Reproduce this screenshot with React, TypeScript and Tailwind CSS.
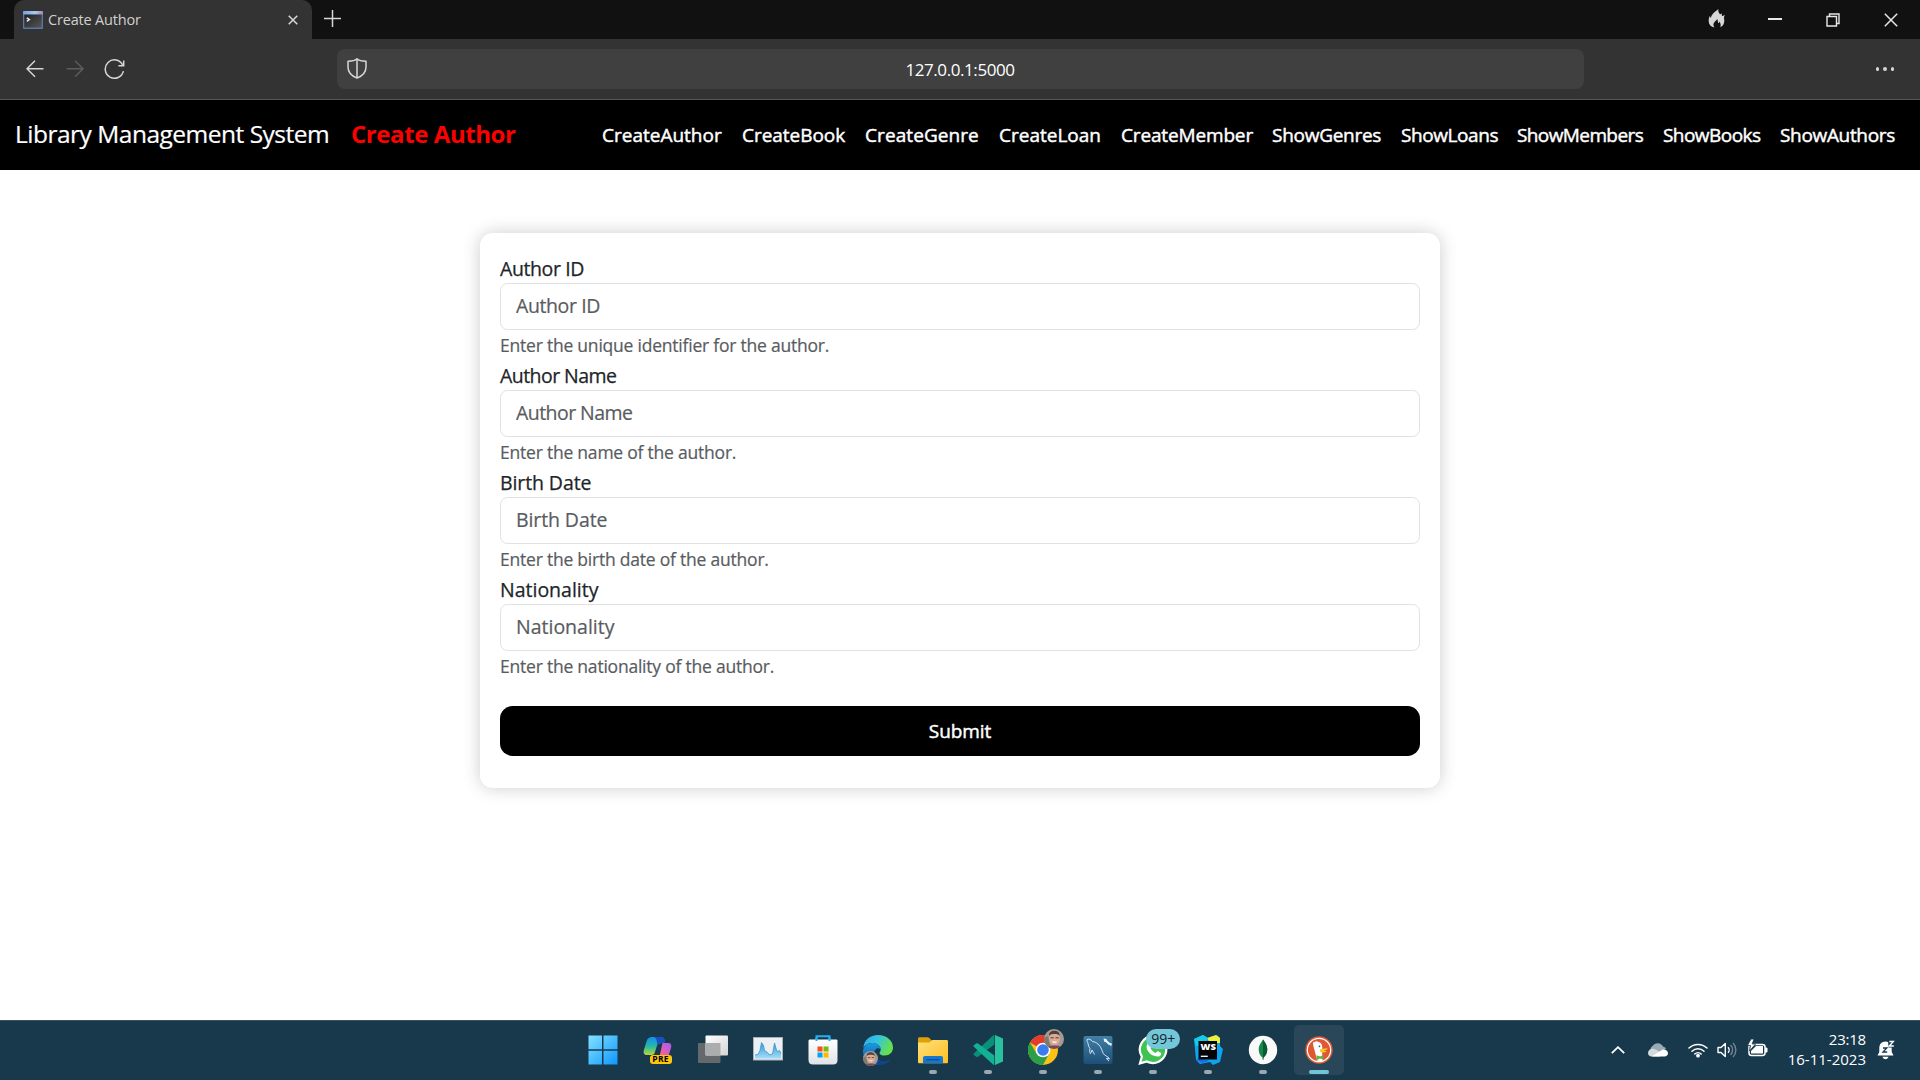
import type { ReactNode } from "react";

const links = [
  { label: "CreateAuthor", cls: "w-[120px]" },
  { label: "CreateBook", cls: "w-[103px] tracking-[-0.04px]" },
  { label: "CreateGenre", cls: "w-[114px] tracking-[0.08px]" },
  { label: "CreateLoan", cls: "w-[102px]" },
  { label: "CreateMember", cls: "w-[131px] tracking-[-0.15px]" },
  { label: "ShowGenres", cls: "w-[109px] tracking-[-0.27px]" },
  { label: "ShowLoans", cls: "w-[96px] tracking-[-0.42px]" },
  { label: "ShowMembers", cls: "w-[126px] tracking-[-0.6px]" },
  { label: "ShowBooks", cls: "w-[97px] tracking-[-0.55px]" },
  { label: "ShowAuthors", cls: "w-[115px] tracking-[-0.33px]" },
];

const fields = [
  { label: "Author ID", cls: "tracking-[-0.4px]", help: "Enter the unique identifier for the author." },
  { label: "Author Name", cls: "tracking-[-0.55px]", help: "Enter the name of the author." },
  { label: "Birth Date", cls: "tracking-[-0.1px]", help: "Enter the birth date of the author." },
  { label: "Nationality", cls: "", help: "Enter the nationality of the author." },
];

function Ico({ children, className = "size-[30px]", box = "0 0 30 30" }: { children: ReactNode; className?: string; box?: string }) {
  return (
    <svg viewBox={box} className={`shrink-0 ${className}`} fill="none">
      {children}
    </svg>
  );
}

function TitleBar() {
  return (
    <div className="flex h-[39px] bg-[#111111] pl-[14px] text-[#d0d0d0]">
      <div className="flex h-full w-[298px] items-center rounded-t-[10px] bg-[#333333] pl-[9px] pr-[14px]">
        <Ico className="h-[18px] w-5" box="0 0 20 18">
          <defs>
            <linearGradient id="term" x1="0" y1="0" x2="1" y2="1">
              <stop stopColor="#222" />
              <stop offset="1" stopColor="#555" />
            </linearGradient>
            <linearGradient id="termbar" x1="0" x2="1">
              <stop stopColor="#6fa0dd" />
              <stop offset=".6" stopColor="#a9c9f0" />
              <stop offset="1" stopColor="#9a8fc0" />
            </linearGradient>
          </defs>
          <rect width="20" height="18" rx="1" fill="#5878ac" />
          <rect width="20" height="3.5" rx="1" fill="url(#termbar)" />
          <rect x="1.3" y="3.6" width="17.4" height="13" fill="url(#term)" />
          <rect x="16" y="1" width="2.5" height="1.6" fill="#c98a9c" />
          <path d="M3.8 6.8 6.4 8.6 3.8 10.4" stroke="#eee" strokeWidth="1.4" />
        </Ico>
        <span className="ml-[5px] mt-px flex-1 whitespace-nowrap text-[14.5px] leading-5 tracking-[-0.18px]">Create Author</span>
        <Ico className="size-[10px]" box="0 0 10 10">
          <path d="M.7.7 9.3 9.3M9.3.7.7 9.3" stroke="#d8d8d8" strokeWidth="1.5" />
        </Ico>
      </div>
      <Ico className="ml-[11px] mt-[9px] size-[19px]" box="0 0 19 19">
        <path d="M9.5 1v17M1 9.5h17" stroke="#d8d8d8" strokeWidth="1.5" />
      </Ico>
      <div className="flex-1" />
      <Ico className="mr-[43px] mt-[9px] h-[19px] w-[17px]" box="0 0 17 19">
        <path
          d="M10.4 0c-.5 2.300.4 4 1.700 5.300.9-.3 1.300-.7 1.300-1.300.5 1 .4 2.200.7 3.100.8-.2 1.300-.9 2.700-1.200-1.300 2.300-.5 3.900-.5 6.200 0 3-1.700 5.300-4 6.200.9-2.300.1-4.300-.8-5.900-.2 1-.8 1.500-1.400 1.700.1-1.700-.7-3.100-.8-4.100-1 1.700-3.900 3.200-3.900 5.500 0 1 .4 2 1 2.900C3 18 .9 15.600.7 12.500c-.1-1.900.3-3.900 1-5.400.4.8.7 1.500 1.300 2C3.200 5.200 6.600 3.400 10.400 0Z"
          fill="#d6d6d6"
        />
      </Ico>
      <Ico className="mr-11 mt-[18px] h-[2px] w-[14px]" box="0 0 14 2">
        <path d="M0 1h14" stroke="#e8e8e8" strokeWidth="2" />
      </Ico>
      <Ico className="mr-[44px] mt-[13px] size-[14px]" box="0 0 14 14">
        <path d="M1 3.500h9.500V13H1ZM3.500 3.500V1H13v9.500h-2.500" stroke="#e8e8e8" strokeWidth="1.400" />
      </Ico>
      <Ico className="mr-[22px] mt-[13px] size-[14px]" box="0 0 14 14">
        <path d="M.8.8 13.200 13.200M13.200.8.8 13.200" stroke="#e8e8e8" strokeWidth="1.500" />
      </Ico>
    </div>
  );
}

function Toolbar() {
  return (
    <div className="flex h-[61px] border-b border-[#575757] bg-[#333333]">
      <div className="flex w-[337px] shrink-0 items-start pl-[26px] pt-[20px]">
        <Ico className="mt-px size-[18px]" box="0 0 18 18">
          <path d="M17.500 8.700H1M9 .7 1 8.700l8 8" stroke="#d6d6d6" strokeWidth="1.500" />
        </Ico>
        <Ico className="ml-[22px] mt-px size-[18px]" box="0 0 18 18">
          <path d="M.5 8.700H17M9 .7l8 8-8 8" stroke="#5d5d5d" strokeWidth="1.500" />
        </Ico>
        <Ico className="ml-[20px] size-[21px]" box="0 0 21 21">
          <path d="M19.400 12.200A9.200 9.200 0 1 1 18.600 5.800M19.700 1.500v5.200h-5.300" stroke="#d6d6d6" strokeWidth="1.500" />
        </Ico>
      </div>
      <div className="mt-[10px] flex h-10 w-[1247px] items-center rounded-[8px] bg-[#404040] pl-[10px] pr-[31px]">
        <Ico className="mb-px h-[21px] w-5" box="0 0 20 21">
          <path d="M10 .8C8.200 2.500 4.900 3.200 1 3.200V9c0 5.300 3.700 9 9 11.100 5.300-2.100 9-5.800 9-11.100V3.200c-3.900 0-7.200-.7-9-2.400ZM10 1v19" stroke="#d6d6d6" strokeWidth="1.500" strokeLinejoin="round" />
        </Ico>
        <span className="flex-1 pt-px text-center text-[17px] tracking-[-0.42px] text-white">127.0.0.1:5000</span>
      </div>
      <div className="ml-auto mr-[26px] flex h-[60px] items-center gap-[4px]">
        <span className="size-[3.500px] rounded-full bg-[#d6d6d6]" />
        <span className="size-[3.500px] rounded-full bg-[#d6d6d6]" />
        <span className="size-[3.500px] rounded-full bg-[#d6d6d6]" />
      </div>
    </div>
  );
}

function NavBar() {
  return (
    <nav className="flex h-[70px] items-center whitespace-nowrap bg-black pl-[15px] pr-[25px]">
      <span className="w-[314px] pb-[2px] text-[24.5px] tracking-[-0.5px] text-white [-webkit-text-stroke:0.2px_white]">Library Management System</span>
      <span className="ml-[22px] pb-[2px] text-[24px] font-bold tracking-[-0.42px] text-[#ff0000]">Create Author</span>
      <div className="ml-auto flex gap-5 text-[19px] font-medium text-white [-webkit-text-stroke:0.45px_white]">
        {links.map((l) => (
          <a key={l.label} className={l.cls}>
            {l.label}
          </a>
        ))}
      </div>
    </nav>
  );
}

function AuthorForm() {
  return (
    <form className="mx-auto mt-[63px] h-[555px] w-[960px] rounded-[12.5px] bg-white px-5 pt-5 shadow-[0_0_18px_rgba(0,0,0,0.2)]">
      {fields.map((f) => (
        <div key={f.label} className="h-[107px]">
          <label className={`block h-[30px] text-[19.5px] leading-[31px] text-[#212529] [-webkit-text-stroke:0.25px_#212529] ${f.cls}`}>{f.label}</label>
          <input
            placeholder={f.label}
            className={`block h-[47px] w-full rounded-[7.5px] border border-[#dee2e6] px-[15px] pb-[2px] text-[19.5px] [-webkit-text-stroke:0.2px_#595c5f] placeholder:text-[#595c5f] ${f.cls}`}
          />
          <div className="mt-[2px] h-[26px] text-[17.5px] leading-[26px] tracking-[-0.22px] text-[#595c5f] [-webkit-text-stroke:0.2px_#595c5f]">{f.help}</div>
        </div>
      ))}
      <button type="button" className="mt-[25px] h-[50px] w-full rounded-[12.5px] bg-black text-[19px] font-medium tracking-[-0.1px] text-white [-webkit-text-stroke:0.45px_white]">
        Submit
      </button>
    </form>
  );
}

function Avatar({ className }: { className: string }) {
  return (
    <svg viewBox="0 0 20 20" className={`absolute rounded-full ${className}`}>
      <rect width="20" height="20" fill="#a79a92" />
      <path d="M0 20V9l4-2 3 13Z" fill="#7d7a70" />
      <ellipse cx="10.500" cy="9.500" rx="5.500" ry="7" fill="#d9ab96" />
      <path d="M5 7C4.500 3 8 1.500 11 1.800s5 2.200 4.600 5.200c-1-1.500-2-2-5-2S6 5.500 5 7Z" fill="#54403a" />
      <path d="M6.500 8.800h3.200M11.500 8.800h3.200" stroke="#4a3934" strokeWidth="1" />
      <path d="M8.500 12.500c1.200 1 2.800 1 4 0" stroke="#fff" strokeWidth="1.100" fill="none" />
      <path d="M3 20c1-3 4-3.500 7.500-3.500S17 17 18 20Z" fill="#7b4a50" />
    </svg>
  );
}

const apps: { name: string; open?: boolean; active?: boolean; icon: ReactNode }[] = [
  {
    name: "start",
    icon: (
      <Ico>
        <defs>
          <linearGradient id="win" x1="0" y1="0" x2="30" y2="30" gradientUnits="userSpaceOnUse">
            <stop stopColor="#86e3ff" />
            <stop offset="1" stopColor="#0b95ff" />
          </linearGradient>
        </defs>
        <path d="M.5.5H14v13.800H.5ZM15.500.5h14v13.800h-14ZM.5 15.700H14v13.800H.5ZM15.500 15.700h14v13.800h-14Z" fill="url(#win)" />
      </Ico>
    ),
  },
  {
    name: "copilot",
    icon: (
      <div className="relative">
        <Ico>
          <defs>
            <linearGradient id="cpa" x1="0" y1="0" x2="0" y2="1">
              <stop stopColor="#168cf0" />
              <stop offset=".5" stopColor="#25b8a8" />
              <stop offset="1" stopColor="#b5d63a" />
            </linearGradient>
            <linearGradient id="cpb" x1="1" y1="0" x2="0" y2="1">
              <stop stopColor="#a45cf5" />
              <stop offset=".6" stopColor="#ec5faa" />
              <stop offset="1" stopColor="#ff9a55" />
            </linearGradient>
          </defs>
          <path d="M9 2h9c2.500 0 3.500 2 4.200 5L17 8.500c-2 0-2.700 1-3.300 3l-1.900 6c-.6 1.800-1.500 2.500-3.300 2.500H4c-3 0-4-2-3-5.500L3.700 6C4.600 3 6.500 2 9 2Z" fill="url(#cpa)" />
          <path d="M11 2h7c2.500 0 3.500 2 4.200 5L17 8.500c-1.500 0-2.200.5-2.800 1.500C14 6 13.500 3 11 2Z" fill="#174fc0" />
          <path d="M19.500 8H25c3 0 3.800 2 3 5l-2.500 8c-1 3-2.500 4-5 4h-7c2.200-1 2.700-3 3.500-5.500L19.500 8Z" fill="url(#cpb)" />
        </Ico>
        <span className="absolute left-[7px] top-[20px] flex h-[9px] w-[22px] items-center justify-center rounded-[3px] bg-[#ffc60a] text-[8.500px] font-bold leading-none tracking-[0.3px] text-black">
          PRE
        </span>
      </div>
    ),
  },
  {
    name: "taskview",
    icon: (
      <Ico>
        <defs>
          <linearGradient id="tva" x1="0" y1="0" x2="1" y2="1">
            <stop stopColor="#fff" />
            <stop offset="1" stopColor="#d5d5d5" />
          </linearGradient>
        </defs>
        <rect y="8" width="22.500" height="20" rx="1" fill="#66696c" />
        <rect x="7.500" y=".5" width="22.500" height="20" rx="1" fill="url(#tva)" />
        <path d="M7.500 8h15v12.500h-15Z" fill="#acaeae" />
      </Ico>
    ),
  },
  {
    name: "monitor",
    icon: (
      <Ico>
        <defs>
          <linearGradient id="mon" x1="0" y1="0" x2="0" y2="1">
            <stop stopColor="#2f9ad8" />
            <stop offset="1" stopColor="#a6dcf8" />
          </linearGradient>
        </defs>
        <rect x=".5" y="2.500" width="29" height="22.500" fill="#eceff3" stroke="#a9b0b8" />
        <path d="M2 23.500V20l3-.5 2-4 1.500-8 2 3 1 5 3 2 2 2.500 3-1 1-5 1-6 2 7 1 1.500 2-1 1.500 3v5Z" fill="url(#mon)" />
        <path d="M2 20l3-.5 2-4 1.500-8 2 3 1 5 3 2 2 2.500 3-1 1-5 1-6 2 7 1 1.500 2-1 1.500 3" stroke="#3a94cc" strokeWidth=".8" />
      </Ico>
    ),
  },
  {
    name: "store",
    icon: (
      <Ico>
        <defs>
          <linearGradient id="sto" x1="0" y1="0" x2="0" y2="1">
            <stop stopColor="#fff" />
            <stop offset="1" stopColor="#dfe2e6" />
          </linearGradient>
        </defs>
        <path d="M8.500 6V1.300h13V6" stroke="#22b0ee" strokeWidth="2" />
        <path d="M.5 6c0-1 .5-1.500 1.500-1.500h26c1 0 1.500.5 1.500 1.500v19c0 3-1.500 4.500-4.500 4.500H5C2 29.500.5 28 .5 25Z" fill="url(#sto)" />
        <path d="M8.500 2v4M21.500 2v4" stroke="#22b0ee" strokeWidth="2" />
        <rect x="9.500" y="11.500" width="5" height="5" fill="#f25022" />
        <rect x="15.500" y="11.500" width="5" height="5" fill="#7fba00" />
        <rect x="9.500" y="17.500" width="5" height="5" fill="#00a4ef" />
        <rect x="15.500" y="17.500" width="5" height="5" fill="#ffb900" />
      </Ico>
    ),
  },
  {
    name: "edge",
    icon: (
      <div className="relative">
        <Ico>
          <defs>
            <linearGradient id="eda" x1="0" y1="0" x2="1" y2=".4">
              <stop stopColor="#2aa9ea" />
              <stop offset=".5" stopColor="#35c4e0" />
              <stop offset="1" stopColor="#66e04c" />
            </linearGradient>
            <linearGradient id="edb" x1="0" y1="0" x2="0" y2="1">
              <stop stopColor="#1a9be0" />
              <stop offset="1" stopColor="#0d4fa5" />
            </linearGradient>
          </defs>
          <path d="M.3 13C1 5 7 0 15 0c8.500 0 15 5.500 15 12.500 0 4.800-3.600 8-8.200 8-3.500 0-5.300-1.300-5.300-2.600 0-.9 1.200-1.300 1.200-3.500C17.700 10.500 13.500 8 9.300 8 5 8 1.800 10 .3 13Z" fill="url(#eda)" />
          <path d="M0 16C.6 11 4.500 8 9.300 8c4 0 8.400 2.500 8.400 6.400-2-2.300-6.400-1.400-6.400 3.600 0 5 5 8.700 10 8.700 3 0 5-1 6.400-2.200C25 28 20 30 15 30 6 30-.5 23.500 0 16Z" fill="url(#edb)" />
          <path d="M11.300 18c0 5 5 8.700 10 8.700 3 0 5-1 6.400-2.200C25 28 20 30 15 30c2-1-5-5-3.700-12Z" fill="#0f4590" />
        </Ico>
        <Avatar className="left-0 top-[16px] size-[15px]" />
      </div>
    ),
  },
  {
    name: "files",
    open: true,
    icon: (
      <Ico>
        <defs>
          <linearGradient id="fld" x1="0" y1="0" x2="1" y2="1">
            <stop stopColor="#ffe07a" />
            <stop offset="1" stopColor="#fdbf22" />
          </linearGradient>
        </defs>
        <path d="M0 4c0-1.200.6-1.800 1.700-1.800h7.500c1 0 1.600.3 2.200.9L14 6v5H0Z" fill="#dfa008" />
        <path d="M0 7.500h10.500c1 0 1.500-.3 2.300-1.200.7-.8 1.200-1.200 2.200-1.200h13.500c1 0 1.500.5 1.500 1.500v20.200c0 1-.5 1.500-1.500 1.500h-27C.5 28.300 0 27.800 0 26.800Z" fill="url(#fld)" />
        <path d="M5 28.300V23c0-1.300.7-2 2-2h16c1.300 0 2 .7 2 2v5.300Z" fill="#1677cf" />
        <path d="M8.500 24.700h13" stroke="#0c4c91" strokeWidth="1.200" />
      </Ico>
    ),
  },
  {
    name: "code",
    open: true,
    icon: (
      <Ico>
        <path d="M22 0 30 3.500v23L22 30Z" fill="#29c0a0" />
        <path d="M21.300 0v9.500L5 21.800c-.6.400-1.300.4-1.800 0L.8 20c-.5-.5-.5-1 0-1.500L20 .5Z" fill="#0a9079" />
        <path d="M21.300 30v-9.500L5 8.500c-.6-.4-1.300-.4-1.800 0L.8 10.300c-.5.500-.5 1 0 1.500L20 29.500Z" fill="#12b095" />
      </Ico>
    ),
  },
  {
    name: "chrome",
    open: true,
    icon: (
      <div className="relative">
        <Ico>
          <circle cx="15" cy="15" r="15" fill="#fbc116" />
          <path d="M15 15 2 7.500A15 15 0 0 1 28 7.500L28 8H15Z" fill="#e33b2e" />
          <path d="M2 7.500A15 15 0 0 0 15 30l6.200-11.500L15 15 8.500 18.500Z" fill="#2a9f48" />
          <circle cx="15" cy="15" r="7.300" fill="#fff" />
          <circle cx="15" cy="15" r="5.800" fill="#3a7cf0" />
        </Ico>
        <Avatar className="left-[16px] top-[-6px] size-5" />
      </div>
    ),
  },
  {
    name: "mysql",
    open: true,
    icon: (
      <Ico>
        <defs>
          <linearGradient id="sql" x1="0" y1="0" x2="0" y2="1">
            <stop stopColor="#4180a8" />
            <stop offset="1" stopColor="#1d4f78" />
          </linearGradient>
        </defs>
        <rect x=".5" y="1" width="29" height="28" rx="2" fill="url(#sql)" />
        <path d="M4 4.500c2-1 4 0 5.500 2 4 .5 7.500 3.500 9.200 8 1 3 2 5.500 4.500 6.500 1.500.7 2.500 1.500 3.300 2.800l-3-.3c.5 1 1.500 1.700 2.500 2.500M4 4.500c-.3 1.500.7 2.500 1 4 .5 2.500 1 3.500 2 5-.5 2-.3 3.500.3 5 1.200-.5 1.200-2.500 1.700-3.500 1 1.500 1.500 3 2.500 4.500" stroke="#dbe8f1" strokeWidth="1" />
        <path d="m22 5 5 4.500" stroke="#eef5fa" strokeWidth="2.200" />
        <path d="m20.500 3.500 1 3.500 2.500-.5-.5-2.500ZM26 8l3 .5-1 3Z" fill="#eef5fa" />
      </Ico>
    ),
  },
  {
    name: "whatsapp",
    open: true,
    icon: (
      <div className="relative">
        <Ico>
          <path d="M15.300 0A14.500 14.500 0 0 0 2.700 21.800L.3 30l8.300-2.200A14.600 14.600 0 1 0 15.300 0Z" fill="#fff" />
          <path d="M15.300 2.300A12.300 12.300 0 0 0 5.100 21.500L3.500 26.800l5.300-1.500A12.300 12.300 0 1 0 15.300 2.300Z" fill="#3fc351" />
          <path d="M10.500 7.800c.9-.9 1.800-.6 2.200.3l1 2.500c.2.600-.5 1.500-1.200 2.300 1.200 2.500 3 4 5.400 5 .7-.8 1.300-1.900 2-1.600l2.900 1.400c.7.400.5 1.800-.3 2.700-1.300 1.400-3.500 1.600-6.500.4-4-1.600-7-5-7.400-8.400-.2-2 .8-3.600 1.900-4.600Z" fill="#fff" />
        </Ico>
        <span className="absolute left-[8px] top-[-6px] flex h-5 w-[34px] items-center justify-center rounded-full bg-[#74c7d8] text-[14px] leading-none tracking-[0.1px] text-[#10252d]">
          99+
        </span>
      </div>
    ),
  },
  {
    name: "webstorm",
    open: true,
    icon: (
      <div className="relative">
        <Ico>
          <path d="m1 4 9-4 5 3 9-3 3 3v8l3 3-3 13-7 3-3-3-10 2-4-4Z" fill="#11a4ee" />
          <path d="m14 3 9-3 4 3v5L17 8Z" fill="#ecf23b" />
          <path d="m1 4 9-4 5 3-4 6-8 2Z" fill="#17cbe6" />
          <path d="m3 25 5-3 8 4-7 2Z" fill="#0d6ff0" />
          <rect x="5.500" y="6" width="18.500" height="18.500" fill="#060606" />
          <path d="M7.800 21.300h7" stroke="#fff" strokeWidth="1.300" />
        </Ico>
        <span className="absolute left-[7px] top-[7px] text-[9.500px] font-extrabold leading-none tracking-[0.2px] text-white">WS</span>
      </div>
    ),
  },
  {
    name: "mongo",
    open: true,
    icon: (
      <Ico>
        <circle cx="15" cy="15" r="14.200" fill="#f8f9f8" />
        <path d="M15 4.500c2 3 4.300 5.500 4.300 10 0 4-2 6.500-3.800 8l-.3 2.500h-.5l-.3-2.500c-1.800-1.500-3.700-4-3.700-8 0-4.500 2.600-7 4.300-10Z" fill="#17864b" />
        <path d="M15 4.500c2 3 4.300 5.500 4.300 10 0 4-2 6.500-3.800 8L15.200 25H15Z" fill="#0a5b33" />
      </Ico>
    ),
  },
  {
    name: "duckduckgo",
    open: true,
    active: true,
    icon: (
      <Ico>
        <circle cx="15" cy="15" r="13.700" fill="#de5833" />
        <circle cx="15" cy="15" r="11.700" stroke="#fff" strokeWidth="1.200" />
        <path d="M9 8.500C8.800 7.500 9.500 7 10.500 7c1-1 2.500-1 3.500-.3 3 .5 4.300 2.800 4.300 5.800l-.3 4 .7 9c-2 .8-4 .6-5.500.1L10.500 15C9.500 12 9.200 10 9 8.500Z" fill="#fff" />
        <path d="M16 14.500c2-.8 5-1.300 7.500-1 .8.500-1.500 1.500-3.500 2 1.500.5 2.500.5 2.500 1.200-1.500 1-5 1-6.500.3Z" fill="#fdc820" />
        <path d="m12.500 20.300 3.500 1.200 3.500-1.500v4.500L16 23.500l-3.500 1.500Z" fill="#5db441" />
        <circle cx="15.500" cy="11.300" r=".9" fill="#2d4f8e" />
      </Ico>
    ),
  },
];

function Taskbar() {
  return (
    <footer className="grid h-[60px] grid-cols-[575px_771px_1fr] border-t border-[#365364] bg-[#18384c]">
      <div />
      <div className="flex">
        {apps.map((a) => (
          <div key={a.name} className="flex h-[59px] w-[55.08px] shrink-0 justify-center pt-[4px]">
            <div className={`flex h-[50px] w-[50px] flex-col items-center rounded-[5px] pt-[10px] ${a.active ? "bg-[#2a475a]" : ""}`}>
              {a.icon}
              {a.open && <span className={`mt-[5px] h-1 shrink-0 rounded-full ${a.active ? "w-5 bg-[#72c5d7]" : "w-2 bg-[#9aa8b2]"}`} />}
            </div>
          </div>
        ))}
      </div>
      <div className="flex items-start justify-end pr-[25px] text-white">
        <Ico className="mr-[23px] mt-[25px] h-2 w-[14px]" box="0 0 14 8">
          <path d="m.8 7.200 6.200-6 6.200 6" stroke="#fff" strokeWidth="1.800" />
        </Ico>
        <Ico className="mr-5 mt-[22px] h-[14px] w-5" box="0 0 20 14">
          <path d="M4 9.500A4 4 0 0 1 4.500 3 6 6 0 0 1 15 3.500a4.500 4.500 0 0 1 3 2l-6 4Z" fill="#9caab4" />
          <path d="M3.500 13.500C1.500 13.500 0 12 0 10c0-2.400 2-4.300 4.500-4.300 1.500 0 2.500.5 3.500 1L14 10l-2 3.500Z" fill="#d3dade" />
          <path d="M4 13.300 14 7c2-1.200 6 0 6 3.300 0 2-1.500 3.200-3.500 3.200H4Z" fill="#fff" />
        </Ico>
        <Ico className="mr-[9px] mt-[21px] h-4 w-5" box="0 0 20 16">
          <path d="M1 6a13 13 0 0 1 18 0M4 9.200a8.700 8.700 0 0 1 12 0M6.800 12a4.600 4.600 0 0 1 6.400 0" stroke="#fff" strokeWidth="1.500" strokeLinecap="round" />
          <circle cx="10" cy="13.700" r="1.900" fill="#fff" />
        </Ico>
        <Ico className="mr-[9px] mt-[21px] h-4 w-[21px]" box="0 0 21 16">
          <path d="M1 5.500h3L8.300 1.500v13L4 10.500H1Z" stroke="#fff" strokeWidth="1.400" strokeLinejoin="round" />
          <path d="M11 5.200a4 4 0 0 1 0 5.600" stroke="#fff" strokeWidth="1.400" />
          <path d="M13.500 3a7 7 0 0 1 0 10M16 1a10 10 0 0 1 0 14" stroke="#6f8593" strokeWidth="1.400" />
        </Ico>
        <Ico className="mt-[18px] h-[18px] w-[21px]" box="0 0 21 18">
          <rect x="2" y="5.500" width="16" height="11" rx="2.500" stroke="#fff" strokeWidth="1.500" />
          <path d="M18.500 9h1.500v4h-1.500Z" fill="#fff" stroke="#fff" />
          <path d="M4 14.500V12l5-5h7v7.500Z" fill="#fff" />
          <path d="M4 0 .5 6.500h3L2.500 12 8.500 5H5.200L7 0Z" fill="#fff" stroke="#18384c" strokeWidth=".8" />
        </Ico>
        <div className="mt-[8px] w-[98px] text-right text-[15px] leading-5">
          <div className="tracking-[-0.2px]">23:18</div>
          <div>16-11-2023</div>
        </div>
        <Ico className="ml-[11px] mt-[19px] h-5 w-[18px]" box="0 0 18 20">
          <path d="M8.500 1.500c3.800 0 6.200 2.800 6.200 6.500v4l1.800 3.500H.5L2.300 12V8c0-3.700 2.400-6.500 6.200-6.500ZM5.500 16.700h6c-.3 1.500-1.500 2.500-3 2.500s-2.700-1-3-2.500Z" fill="#fff" />
          <path d="M6 8h3.800L6 12h4.200" stroke="#18384c" strokeWidth="1.300" />
          <path d="M11 0h7v7.500h-6.500Z" fill="#18384c" />
          <path d="M12.300 1.500h4l-4 4.500h4.500" stroke="#fff" strokeWidth="1.400" />
        </Ico>
      </div>
    </footer>
  );
}

export default function App() {
  return (
    <div className="flex h-[1080px] w-[1920px] flex-col overflow-hidden bg-white font-['Open_Sans','Noto_Sans',sans-serif]">
      <TitleBar />
      <Toolbar />
      <NavBar />
      <main className="flex-1">
        <AuthorForm />
      </main>
      <Taskbar />
    </div>
  );
}
